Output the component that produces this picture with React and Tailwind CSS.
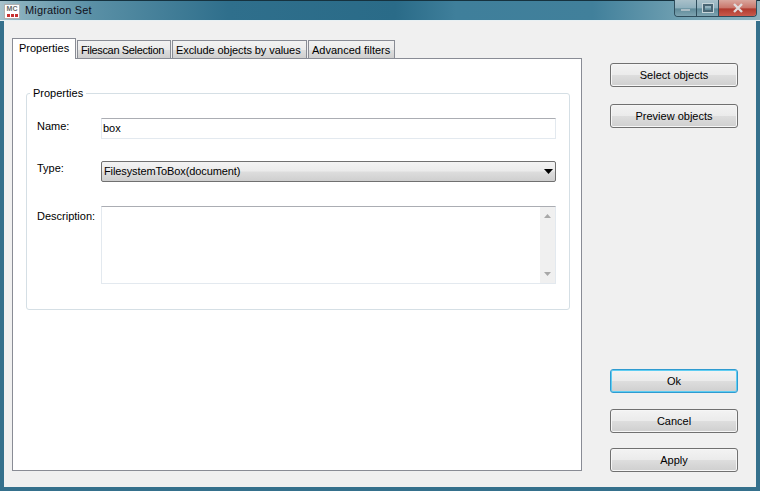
function Btn({ children, focus, className }) {
  return (
    <button
      className={
        "block w-[128px] h-[24px] rounded-[3px] border text-[11px] text-black bg-[linear-gradient(to_bottom,#f3f3f3_0%,#ebebeb_48%,#dddddd_52%,#cfcfcf_100%)] " +
        (focus ? "border-[#2f9bd0] shadow-[inset_0_0_0_1px_#5fcdf2] " : "border-[#707070] shadow-[inset_0_0_0_1px_#f6f6f6] ") +
        (className || "")
      }
    >
      {children}
    </button>
  );
}
function Tab({ children, w, active }) {
  return active ? (
    <div className={"relative z-10 -mb-px h-[21px] border border-b-0 border-[#898c95] bg-white pt-[1px] pl-[6px] text-[11px] leading-[16px] " + w}>{children}</div>
  ) : (
    <div className={"h-[18px] border border-b-0 border-[#898c95] bg-[linear-gradient(to_bottom,#f2f2f2_0%,#ebebeb_50%,#dddddd_55%,#cfcfcf_100%)] pl-[3px] text-[11px] leading-[18px] whitespace-nowrap " + w}>{children}</div>
  );
}
function Row({ label, className, children, labelPt }) {
  return (
    <div className={"flex " + (className || "")}>
      <div className={"w-[64px] text-[11px] leading-[14px] " + labelPt}>{label}</div>
      {children}
    </div>
  );
}
export default function App() {
  return (
    <div className="w-[760px] h-[491px] flex flex-col overflow-hidden font-['Liberation_Sans',sans-serif] text-black bg-[#35708c]">
      <div className="relative h-[21px] shrink-0 flex items-center border-t border-[#16323f] border-b border-b-[#e8f0f3] bg-[linear-gradient(to_right,#a9c3cc_0%,#86aebc_3%,#5a90a6_12%,#2f6f8c_30%,#2a6b88_52%,#3f7f9b_60%,#41809b_78%,#79a6b6_92%,#8fb3bf_100%)]">
        <div className="ml-[4px] mt-[1px] w-[16px] h-[15px] bg-white border border-[#b0b0b0] flex flex-col items-center overflow-hidden">
          <span className="text-[7px] leading-[8px] font-bold text-[#666]">MC</span>
          <div className="flex gap-px mt-[1px]">
            <div className="w-[3px] h-[3px] bg-[#c83030]" />
            <div className="w-[3px] h-[3px] bg-[#c83030]" />
            <div className="w-[3px] h-[3px] bg-[#c83030]" />
          </div>
        </div>
        <span className="ml-[5px] text-[11px] tracking-[0.15px] text-[#10101a]">Migration Set</span>
        <div className="absolute right-[3px] top-[-1px] h-[17px] w-[83px] flex rounded-b-[4px] border border-t-0 border-[#2e4d5c] overflow-hidden">
          <div className="w-[22px] border-r border-[#2e4d5c] bg-[linear-gradient(to_bottom,#a9c0c9_0%,#8fb0bd_50%,#5f8a99_55%,#7da3b0_100%)] flex items-center justify-center">
            <div className="w-[9px] h-[2px] mt-[3px] bg-[#a9bcc4]" />
          </div>
          <div className="w-[22px] border-r border-[#2e4d5c] bg-[linear-gradient(to_bottom,#a9c0c9_0%,#8fb0bd_50%,#5f8a99_55%,#7da3b0_100%)] flex items-center justify-center">
            <div className="w-[10px] h-[8px] border-[2px] border-[#4a6674] outline outline-1 outline-[#c6d4d9]" />
          </div>
          <div className="flex-1 bg-[linear-gradient(to_bottom,#d9a79e_0%,#c9756a_50%,#b03a2e_55%,#c85a4c_100%)] flex items-center justify-center">
            <svg width="12" height="10" viewBox="0 0 12 10">
              <path d="M2 1 L10 9 M10 1 L2 9" stroke="#e0dcdc" strokeWidth="2.4" fill="none" />
            </svg>
          </div>
        </div>
      </div>
      <div className="flex-1 mx-[4px] mb-[4px] bg-[#f0f0f0] flex">
        <div className="ml-[8px] mt-[17px] w-[570px] h-[433px] flex flex-col">
          <div className="flex items-end gap-[1px] relative">
            <Tab active w="w-[64px]">Properties</Tab>
            <Tab w="w-[94px]"><span className="tracking-[-0.35px]">Filescan Selection</span></Tab>
            <Tab w="w-[135px]"><span className="tracking-[-0.08px]">Exclude objects by values</span></Tab>
            <Tab w="w-[87px]">Advanced filters</Tab>
          </div>
          <div className="flex-1 border border-[#898c95] bg-white pl-[13px] pr-[11px] pt-[34px]">
            <div className="relative h-[217px] rounded-[3px] border border-[#d5dfe5] pl-[10px] pr-[13px] pt-[24px]">
              <span className="absolute left-[3px] top-[-8px] bg-white px-[3px] text-[11px] leading-[14px]">Properties</span>
              <Row label="Name:" labelPt="pt-[1px]">
                <div className="flex-1 h-[21px] border border-[#e3e9ef] border-t-[#abadb3] pl-[1px] text-[11px] leading-[19px]">box</div>
              </Row>
              <Row label="Type:" className="mt-[22px]" labelPt="pt-0">
                <div className="flex-1 h-[21px] rounded-[2px] border border-[#707070] pl-[2px] pr-[2px] flex items-center justify-between text-[11px] bg-[linear-gradient(to_bottom,#f3f3f3_0%,#ebebeb_48%,#dddddd_52%,#cfcfcf_100%)]">
                  <span className="tracking-[-0.1px]">FilesystemToBox(document)</span>
                  <svg width="9" height="5" viewBox="0 0 9 5"><path d="M0 0 H9 L4.5 5 Z" fill="#000" /></svg>
                </div>
              </Row>
              <Row label="Description:" className="mt-[24px]" labelPt="pt-[3px]">
                <div className="flex-1 h-[78px] border border-[#e3e9ef] border-t-[#abadb3] flex justify-end">
                  <div className="w-[15px] bg-[#f0f0f0] flex flex-col items-center justify-between py-[7px]">
                    <svg width="7" height="4" viewBox="0 0 7 4"><path d="M3.5 0 L7 4 H0 Z" fill="#a8a8a8" /></svg>
                    <svg width="7" height="4" viewBox="0 0 7 4"><path d="M0 0 H7 L3.5 4 Z" fill="#a8a8a8" /></svg>
                  </div>
                </div>
              </Row>
            </div>
          </div>
        </div>
        <div className="ml-[28px] mt-[42px] mb-[15px] flex flex-col">
          <Btn>Select objects</Btn>
          <Btn className="mt-[17px]">Preview objects</Btn>
          <Btn focus className="mt-auto">Ok</Btn>
          <Btn className="mt-[16px]">Cancel</Btn>
          <Btn className="mt-[15px]">Apply</Btn>
        </div>
      </div>
    </div>
  );
}
